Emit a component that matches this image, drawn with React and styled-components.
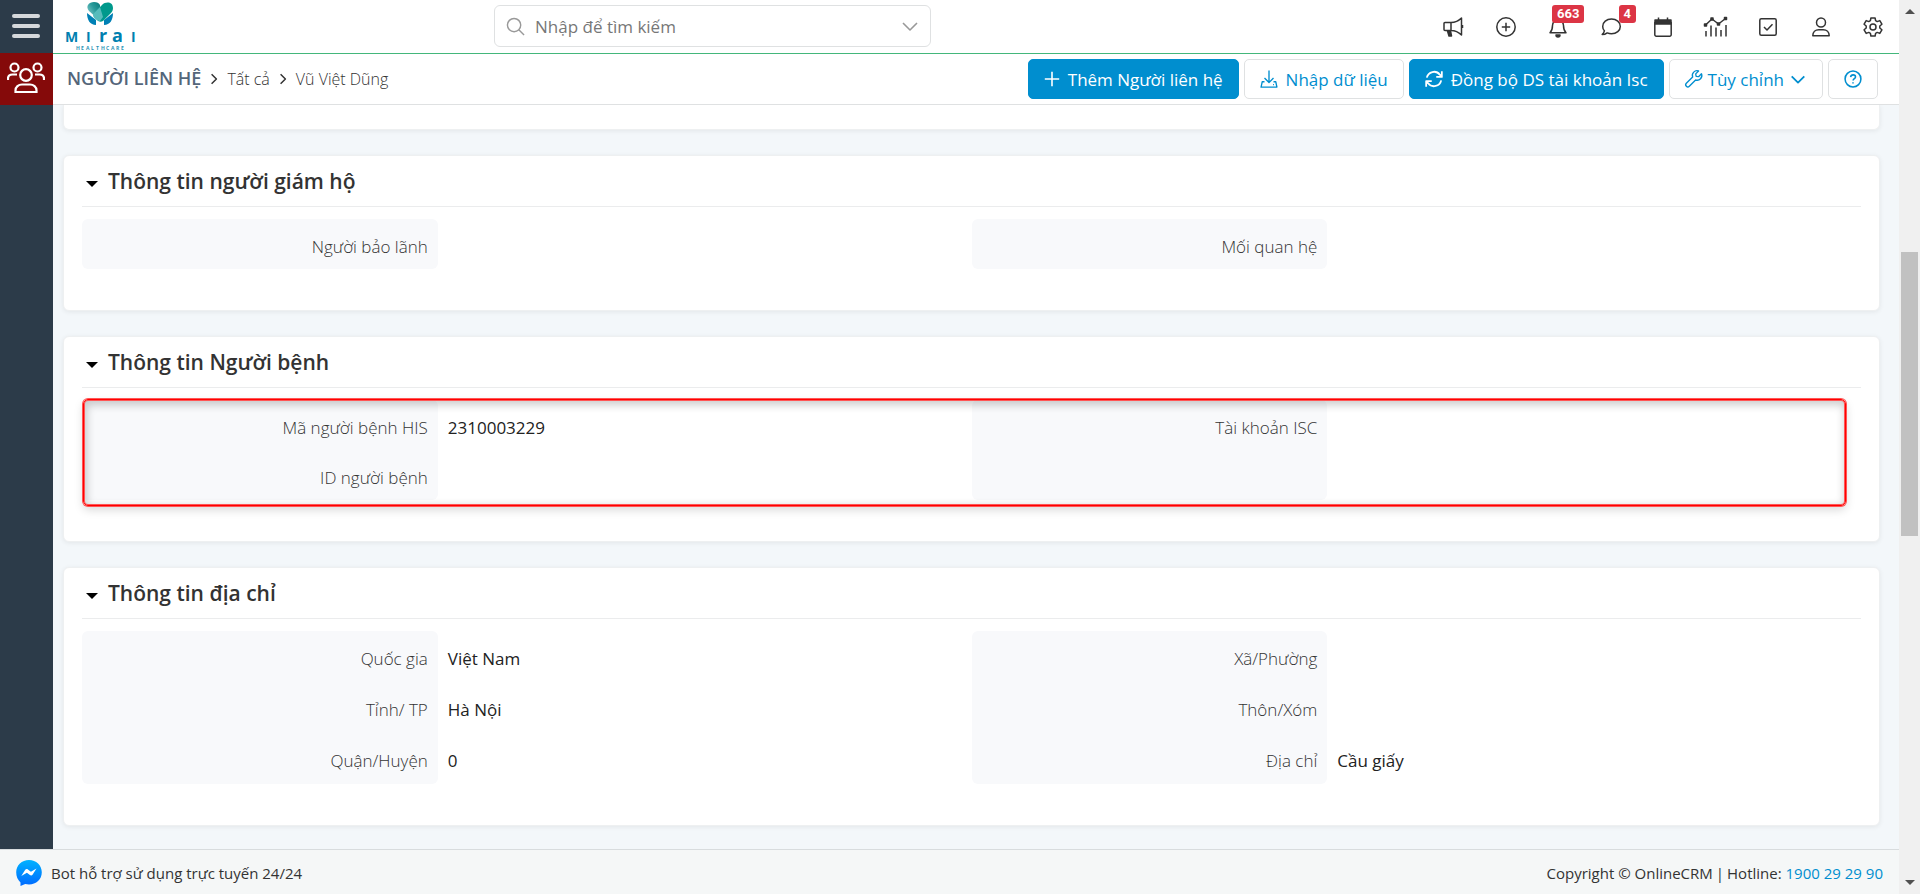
import React, { useState } from "react";
import styled, { createGlobalStyle, css } from "styled-components";

const colors = {
  blue: "#008ecf",
  navy: "#2c3b49",
  maroon: "#850a0a",
  green: "#43b77b",
  red: "#dc3545",
  text: "#333",
  label: "#333",
  line: "#dfe1e2",
  page: "#f3f7fa"
};

const sections = [
  {
    title: "Thông tin người giám hộ",
    columns: [[["Người bảo lãnh", ""]], [["Mối quan hệ", ""]]]
  },
  {
    title: "Thông tin Người bệnh",
    highlighted: true,
    columns: [
      [
        ["Mã người bệnh HIS", "2310003229"],
        ["ID người bệnh", ""]
      ],
      [
        ["Tài khoản ISC", ""],
        ["", ""]
      ]
    ]
  },
  {
    title: "Thông tin địa chỉ",
    rowHeight: 51,
    columns: [
      [
        ["Quốc gia", "Việt Nam"],
        ["Tỉnh/ TP", "Hà Nội"],
        ["Quận/Huyện", "0"]
      ],
      [
        ["Xã/Phường", ""],
        ["Thôn/Xóm", ""],
        ["Địa chỉ", "Cầu giấy"]
      ]
    ]
  }
];

const icons = {
  megaphone: (
    <>
      <path d="M1 6.500a1 1 0 0 1 1-1h6v8H2a1 1 0 0 1-1-1zM8 5.500c3.500 0 7.500-1.500 10.500-4.500v17c-3-3-7-4.500-10.500-4.500M19.500 8v3" />
      <path d="M4.500 14l1.500 5h2.500l-1-5z" fill="currentColor" />
    </>
  ),
  add: (
    <>
      <circle cx="10" cy="10" r="9.200" />
      <path d="M10 5.800v8.400M5.800 10h8.400" />
    </>
  ),
  bell: (
    <>
      <path d="M2 15.800c2-2 2.500-4 2.500-7.300a5.500 5.500 0 0 1 11 0c0 3.300.5 5.300 2.500 7.300zM10 1.500v1.500" />
      <path d="M8 18h4a2 2 0 0 1-4 0z" fill="currentColor" />
    </>
  ),
  chat: (
    <path d="M10.500 2c5 0 8.800 3.300 8.800 7.400s-3.800 7.400-8.800 7.400c-1.600 0-3-.3-4.300-.9-1.300 1-3 1.700-5 1.700 1.100-1.200 1.900-2.500 2.200-3.800C2.300 12.600 1.700 11.100 1.700 9.400 1.700 5.300 5.500 2 10.500 2z" />
  ),
  calendar: (
    <>
      <path d="M1.800 5.500h16.400v12.200a1.500 1.500 0 0 1-1.500 1.500H3.300a1.500 1.500 0 0 1-1.500-1.500z" />
      <path d="M2 3h16v4H2z" fill="currentColor" />
      <path d="M5.500.500v3M14.500.500v3" />
    </>
  ),
  chart: (
    <>
      <path d="M-.500 8l6.500-6 6.500 5 7-5.500M0 14v5.500M5 8.500v11M10 10.500v9M15 13v6.500M20 8v11.500" />
      <path d="M-1.500 7h2v2h-2zM5 1h2v2H5zM11.500 6h2v2h-2zM18.500.500h2v2h-2z" fill="currentColor" />
    </>
  ),
  check: (
    <>
      <rect x="1.800" y="1.800" width="16.400" height="16.400" rx="1.500" />
      <path d="M6 10l3 3 5.500-5.800" />
    </>
  ),
  user: (
    <>
      <circle cx="10" cy="5.500" r="4.500" />
      <path d="M1.800 18.800c0-3.800 2.600-6 6-6h4.400c3.400 0 6 2.200 6 6z" />
    </>
  ),
  gear: (
    <>
      <path d="M7.900 1h4.200l.5 2.700 1.600.9 2.600-1 2.100 3.600L16.800 9v2l2.100 1.800-2.100 3.600-2.600-1-1.600.9-.5 2.700H7.900l-.5-2.700-1.600-.9-2.600 1-2.100-3.600L3.200 11V9L1.100 7.200l2.100-3.600 2.600 1 1.600-.9z" />
      <circle cx="10" cy="10" r="3" />
    </>
  ),
  search: (
    <>
      <circle cx="8.500" cy="8.500" r="7" />
      <path d="M13.500 13.500l5.500 5.500" />
    </>
  ),
  down: <path d="M3 7l7 7 7-7" />,
  right: <path d="M6 2l8 8-8 8" />,
  plus: <path d="M10 1v18M1 10h18" />,
  import: (
    <>
      <path d="M10 .500v13M5 9l5 5 5-5M5 13H2.500L1.200 19h17.600l-1.300-6H15" />
      <path d="M14.500 16.200h1" />
    </>
  ),
  sync: (
    <path d="M2 8.500a8.200 8.200 0 0 1 14.500-3.300l2 2.300M18.700 1.500v6.200h-6.200M18 11.500a8.200 8.200 0 0 1-14.500 3.300l-2-2.300M1.300 18.500v-6.200h6.200" />
  ),
  wrench: (
    <path d="M18.300 4.200l-3.200 3.200-2.700-.4-.5-2.700 3.200-3.200a5.200 5.200 0 0 0-6.600 6.700l-7 7a2.300 2.300 0 0 0 3.300 3.300l7-7a5.200 5.200 0 0 0 6.500-6.900z" />
  ),
  help: (
    <>
      <circle cx="10" cy="10" r="8.800" />
      <path d="M7.300 7.800c.3-1.600 1.400-2.400 2.800-2.400 1.600 0 2.700 1 2.700 2.300 0 2-2.700 2-2.700 4M10 13.600v1.500" />
    </>
  )
};

const Icon = ({ name, size = 20, stroke = 1.5 }) => (
  <IconStyled
    width={size}
    height={size}
    viewBox="0 0 20 20"
    strokeWidth={stroke}
    aria-hidden="true"
  >
    {icons[name]}
  </IconStyled>
);

const Logo = () => (
  <svg width="72" height="50" viewBox="0 0 72 50" role="img" aria-label="Mirai Healthcare">
    <defs>
      <linearGradient id="leaf" x1="0" y1="1" x2="1" y2="0">
        <stop offset="0" stopColor="#a5dde0" />
        <stop offset="0.600" stopColor="#2a9b9b" />
        <stop offset="1" stopColor="#087b7c" />
      </linearGradient>
    </defs>
    <path d="M22 12c0 7 3 12 9 12v-5zM48 12c0 7-3 12-9 12v-5z" fill="#0080b5" />
    <path d="M35 20L24 10C20 5 24 1 29 1c3 0 5 1 6 3z" fill="url(#leaf)" />
    <path d="M28 13L37 4c4-4 11-3 11 3 0 2-1 4-2 5l-8 8c-2 1-4 1-6-1-2-1-4-3-4-6z" fill="#00998c" />
    <path d="M28 13l7-7 3 10-3 4c-4 0-7-3-7-7z" fill="#7ccbd0" opacity="0.700" />
    <LogoName y="41">
      <tspan x="0">M</tspan>
      <tspan x="21">I</tspan>
      <LogoSmall x="34">r</LogoSmall>
      <LogoSmall x="47">a</LogoSmall>
      <tspan x="66">I</tspan>
    </LogoName>
    <LogoCaption x="11 16 21 26 31 36 41 46 51 56" y="49">
      HEALTHCARE
    </LogoCaption>
  </svg>
);

const Section = ({ title, columns, highlighted, rowHeight = 50 }) => {
  const [open, setOpen] = useState(true);
  return (
    <Card>
      <CardTitle>
        <CardToggle
          type="button"
          aria-expanded={open}
          onClick={() => setOpen(!open)}
        >
          <Caret $open={open} />
          {title}
        </CardToggle>
      </CardTitle>
      {open && (
        <CardBody>
          {columns.map((fields, i) => (
            <FieldList key={i} $rowHeight={rowHeight}>
              {fields.map(([label, value], j) => (
                <React.Fragment key={j}>
                  <FieldLabel>{label}</FieldLabel>
                  <FieldValue>{value}</FieldValue>
                </React.Fragment>
              ))}
            </FieldList>
          ))}
          {highlighted && <Highlight />}
        </CardBody>
      )}
    </Card>
  );
};

const tools = [
  { icon: "megaphone", label: "Thông báo chung" },
  { icon: "add", label: "Thêm nhanh" },
  { icon: "bell", label: "Thông báo", count: 663 },
  { icon: "chat", label: "Tin nhắn", count: 4 },
  { icon: "calendar", label: "Lịch" },
  { icon: "chart", label: "Báo cáo" },
  { icon: "check", label: "Công việc" },
  { icon: "user", label: "Tài khoản" },
  { icon: "gear", label: "Cài đặt" }
];

export default function App() {
  return (
    <Shell>
      <GlobalStyle />
      <Page>
        <Workspace>
          <Sidebar>
            <MenuButton type="button" aria-label="Menu">
              <MenuBar />
              <MenuBar />
              <MenuBar />
            </MenuButton>
            <ModuleLink href="#contacts" aria-label="Người liên hệ">
              <svg
                width="38"
                height="32"
                viewBox="0 0 38 32"
                fill="none"
                stroke="#fff"
                strokeWidth="2.200"
                aria-hidden="true"
              >
                <circle cx="7.500" cy="5.500" r="4" />
                <circle cx="30.500" cy="5.500" r="4" />
                <circle cx="19" cy="13" r="5.800" />
                <path d="M1 18v-1.500c0-2.500 2-4 4.500-4H10M37 18v-1.500c0-2.500-2-4-4.500-4H28" />
                <path d="M8.500 30v-1.500c0-3.500 3-6 6.500-6h8c3.500 0 6.500 2.500 6.500 6V30z" />
              </svg>
            </ModuleLink>
          </Sidebar>
          <Content>
            <Header>
              <LogoLink href="#home">
                <Logo />
              </LogoLink>
              <SearchBox>
                <Icon name="search" size={19} />
                <SearchInput
                  type="text"
                  aria-label="Tìm kiếm"
                  placeholder="Nhập để tìm kiếm"
                />
                <IconButton type="button" aria-label="Mở rộng tìm kiếm">
                  <Icon name="down" stroke={1.6} />
                </IconButton>
              </SearchBox>
              <Tools>
                {tools.map(({ icon, label, count }) => (
                  <IconButton key={icon} type="button" aria-label={label}>
                    <Icon name={icon} />
                    {count && <Badge $short={count < 10}>{count}</Badge>}
                  </IconButton>
                ))}
              </Tools>
            </Header>
            <ActionBar>
              <Breadcrumb aria-label="Breadcrumb">
                <ModuleName href="#contacts">NGƯỜI LIÊN HỆ</ModuleName>
                <Icon name="right" size={12} stroke={2.5} />
                <Crumb href="#all">Tất cả</Crumb>
                <Icon name="right" size={12} stroke={2.5} />
                <Crumb as="span">Vũ Việt Dũng</Crumb>
              </Breadcrumb>
              <Actions>
                <ActionButton type="button" $primary>
                  <Icon name="plus" size={16} stroke={2} />
                  Thêm Người liên hệ
                </ActionButton>
                <ActionButton type="button">
                  <Icon name="import" size={18} />
                  Nhập dữ liệu
                </ActionButton>
                <ActionButton type="button" $primary>
                  <Icon name="sync" size={18} stroke={2} />
                  Đồng bộ DS tài khoản Isc
                </ActionButton>
                <ActionButton type="button" $tight>
                  <Icon name="wrench" size={18} />
                  Tùy chỉnh
                  <Icon name="down" size={18} stroke={2} />
                </ActionButton>
                <ActionButton type="button" aria-label="Trợ giúp">
                  <Icon name="help" size={18} stroke={1.7} />
                </ActionButton>
              </Actions>
            </ActionBar>
            <Main>
              <CardTail />
              {sections.map(section => (
                <Section key={section.title} {...section} />
              ))}
            </Main>
          </Content>
        </Workspace>
        <Footer>
          <BotLink href="#bot">
            <svg width="26" height="26" viewBox="0 0 26 26" aria-hidden="true">
              <defs>
                <linearGradient id="bot" x1="0" y1="0" x2="0" y2="1">
                  <stop offset="0" stopColor="#00b2ff" />
                  <stop offset="1" stopColor="#006aff" />
                </linearGradient>
              </defs>
              <path
                d="M13 0c7.200 0 12.800 5.300 12.800 12.300S20.200 24.600 13 24.600c-1.300 0-2.600-.2-3.800-.5L4.500 26v-3.600C1.700 20 .2 16.500.2 12.300.2 5.300 5.800 0 13 0z"
                fill="url(#bot)"
              />
              <path
                d="M5.300 16l3.800-6c.6-1 1.900-1.200 2.800-.5l3 2.300 5.600-3.300-3.800 6c-.6 1-1.900 1.200-2.800.5l-3-2.300z"
                fill="#fff"
              />
            </svg>
            Bot hỗ trợ sử dụng trực tuyến 24/24
          </BotLink>
          <span>
            Copyright © OnlineCRM<Divider>|</Divider>Hotline:{" "}
            <Hotline href="tel:1900292990">1900 29 29 90</Hotline>
          </span>
        </Footer>
      </Page>
      <ScrollRail aria-hidden="true">
        <RailArrow $up />
        <RailGap $grow={238} />
        <RailThumb />
        <RailGap $grow={344} />
        <RailArrow />
      </ScrollRail>
    </Shell>
  );
}

const GlobalStyle = createGlobalStyle`
  * {
    box-sizing: border-box;
  }

  body {
    margin: 0;
    font-family: "Open Sans", "Noto Sans", sans-serif;
    font-size: 17px;
    color: ${colors.text};
  }

  button, input {
    font: inherit;
    color: inherit;
  }

  a {
    color: inherit;
    text-decoration: none;
  }
`;

const Shell = styled.div`
  display: flex;
  height: 100vh;
  overflow: hidden;
`;

const Page = styled.div`
  flex: 1;
  min-width: 0;
  display: flex;
  flex-direction: column;
`;

const Workspace = styled.div`
  flex: 1;
  min-height: 0;
  display: flex;
`;

const Sidebar = styled.nav`
  flex: 0 0 53px;
  display: flex;
  flex-direction: column;
  background: ${colors.navy};
`;

const MenuButton = styled.button`
  display: flex;
  flex-direction: column;
  align-items: center;
  justify-content: center;
  gap: 6px;
  height: 53px;
  padding: 0 2px 1px 0;
  border: 0;
  background: none;
`;

const MenuBar = styled.span`
  width: 28px;
  height: 4px;
  border-radius: 2px;
  background: #d5d8db;
`;

const ModuleLink = styled.a`
  display: flex;
  align-items: center;
  justify-content: center;
  height: 52px;
  padding: 0 2px 2px 0;
  background: ${colors.maroon};
`;

const Content = styled.div`
  flex: 1;
  min-width: 0;
  display: flex;
  flex-direction: column;
`;

const Header = styled.header`
  flex: 0 0 54px;
  display: flex;
  align-items: center;
  padding-bottom: 1px;
  border-bottom: 1px solid ${colors.green};
  background: #fff;
`;

const LogoLink = styled.a`
  flex: 0 0 441px;
  display: flex;
  padding-left: 12px;
`;

const LogoName = styled.text`
  font-size: 14px;
  font-weight: 700;
  fill: #0080b0;
`;

const LogoSmall = styled.tspan`
  font-size: 18px;
`;

const LogoCaption = styled.text`
  font-size: 5px;
  font-weight: 700;
  fill: #2a93b5;
`;

const SearchBox = styled.div`
  flex: 0 1 437px;
  display: flex;
  align-items: center;
  gap: 10px;
  height: 42px;
  padding: 0 10px 0 11px;
  border: 1px solid ${colors.line};
  border-radius: 6px;
  color: #999;
`;

const SearchInput = styled.input`
  flex: 1;
  min-width: 0;
  padding: 0;
  border: 0;
  outline: 0;
  background: none;
  color: ${colors.text};

  &::placeholder {
    color: #777;
  }
`;

const Tools = styled.div`
  flex: 0 1 440px;
  display: flex;
  align-items: center;
  justify-content: space-between;
  margin-left: auto;
  margin-right: 16px;
  padding-top: 2px;
`;

const IconStyled = styled.svg`
  flex: none;
  display: block;
  fill: none;
  stroke: currentColor;
  stroke-linejoin: round;
  overflow: visible;
`;

const IconButton = styled.button`
  position: relative;
  padding: 0;
  border: 0;
  background: none;
`;

const Badge = styled.span`
  position: absolute;
  left: ${({ $short }) => ($short ? 18 : 4)}px;
  bottom: 14px;
  padding: 0 5px;
  border-radius: 3px;
  background: ${colors.red};
  color: #fff;
  font-family: Roboto, sans-serif;
  font-size: 13px;
  font-weight: 700;
  line-height: 18px;
`;

const ActionBar = styled.div`
  flex: 0 0 51px;
  display: flex;
  align-items: center;
  justify-content: space-between;
  padding: 0 21px 0 14px;
  border-bottom: 1px solid ${colors.line};
  background: #fff;
`;

const Breadcrumb = styled.nav`
  display: flex;
  align-items: center;
  gap: 7px;
`;

const ModuleName = styled.a`
  font-size: 18px;
  font-weight: 600;
  line-height: 24px;
  padding-bottom: 2px;
  color: #54667a;
`;

const Crumb = styled.a`
  font-size: 16px;
  font-weight: 300;
  line-height: 24px;
`;

const Actions = styled.div`
  display: flex;
  gap: 5px;
`;

const ActionButton = styled.button`
  display: flex;
  align-items: center;
  gap: ${({ $tight }) => ($tight ? 5 : 8)}px;
  height: 40px;
  padding: 0 15px;
  border: 1px solid ${colors.line};
  border-radius: 5px;
  background: #fff;
  color: ${colors.blue};

  ${({ $primary }) =>
    $primary &&
    css`
      border-color: ${colors.blue};
      background: ${colors.blue};
      color: #fff;
    `}
`;

const Main = styled.main`
  flex: 1;
  min-height: 0;
  display: flex;
  flex-direction: column;
  gap: 25px;
  padding: 0 19px 0 10px;
  overflow: hidden;
  background: ${colors.page};
`;

const Card = styled.section`
  flex: none;
  padding: 0 18px 41px;
  border: 1px solid #eef0f1;
  border-radius: 6px;
  background: #fff;
  box-shadow: 0 1px 5px rgba(0, 0, 0, 0.07);
`;

const CardTail = styled(Card)`
  height: 25px;
  padding: 0;
  border-top: 0;
  border-radius: 0 0 6px 6px;
`;

const CardTitle = styled.h2`
  height: 51px;
  margin: 0 0 12px;
  border-bottom: 1px solid #ebeced;
  font-size: 21px;
  font-weight: 600;
`;

const CardToggle = styled.button`
  display: flex;
  align-items: center;
  gap: 10px;
  height: 50px;
  padding: 0 4px;
  border: 0;
  background: none;
`;

const Caret = styled.span`
  margin-top: 5px;
  border: 6px solid transparent;
  border-bottom-width: 0;
  border-top-color: #000;
  transform: ${({ $open }) => ($open ? "none" : "rotate(-90deg)")};
`;

const CardBody = styled.div`
  position: relative;
  display: grid;
  grid-template-columns: 1fr 1fr;
`;

const FieldList = styled.dl`
  display: grid;
  grid-template-columns: 40% 1fr;
  grid-auto-rows: ${({ $rowHeight }) => $rowHeight}px;
  margin: 0;
  line-height: 24px;
`;

const FieldLabel = styled.dt`
  padding: 16px 10px 0;
  background: #f8f9fb;
  color: ${colors.label};
  font-weight: 300;
  text-align: right;

  &:first-of-type {
    border-top-left-radius: 6px;
    border-top-right-radius: 6px;
  }

  &:last-of-type {
    border-bottom-left-radius: 6px;
    border-bottom-right-radius: 6px;
  }
`;

const FieldValue = styled.dd`
  margin: 0;
  padding: 16px 10px 0;
  color: #222;
`;

const Highlight = styled.div`
  position: absolute;
  inset: -1px 15px -6px 1px;
  border: 1px solid #f00;
  border-radius: 5px;
  box-shadow: 0 0 0 1px #f55, inset 0 0 0 1px #f55,
    0 4px 10px rgba(0, 0, 0, 0.15), inset 1px 3px 8px 2px rgba(0, 0, 0, 0.2);
  pointer-events: none;
`;

const Footer = styled.footer`
  flex: 0 0 45px;
  display: flex;
  align-items: center;
  justify-content: space-between;
  padding: 2px 16px 0;
  border-top: 1px solid #d8dcde;
  background: #f5f7f7;
  font-size: 15px;
`;

const BotLink = styled.a`
  display: flex;
  align-items: center;
  gap: 9px;
`;

const Divider = styled.span`
  padding: 0 3px;
`;

const Hotline = styled.a`
  color: ${colors.blue};
`;

const ScrollRail = styled.div`
  flex: 0 0 21px;
  display: flex;
  flex-direction: column;
  align-items: center;
  padding: 9px 0;
  background: #f0f0f0;
`;

const RailArrow = styled.span`
  border: 5px solid transparent;
  ${({ $up }) =>
    $up
      ? "border-top-width: 0; border-bottom-color: #505050;"
      : "border-bottom-width: 0; border-top-color: #505050;"}
`;

const RailGap = styled.span`
  flex: ${({ $grow }) => $grow};
`;

const RailThumb = styled.span`
  flex: 284;
  width: 17px;
  background: #c1c1c1;
`;
